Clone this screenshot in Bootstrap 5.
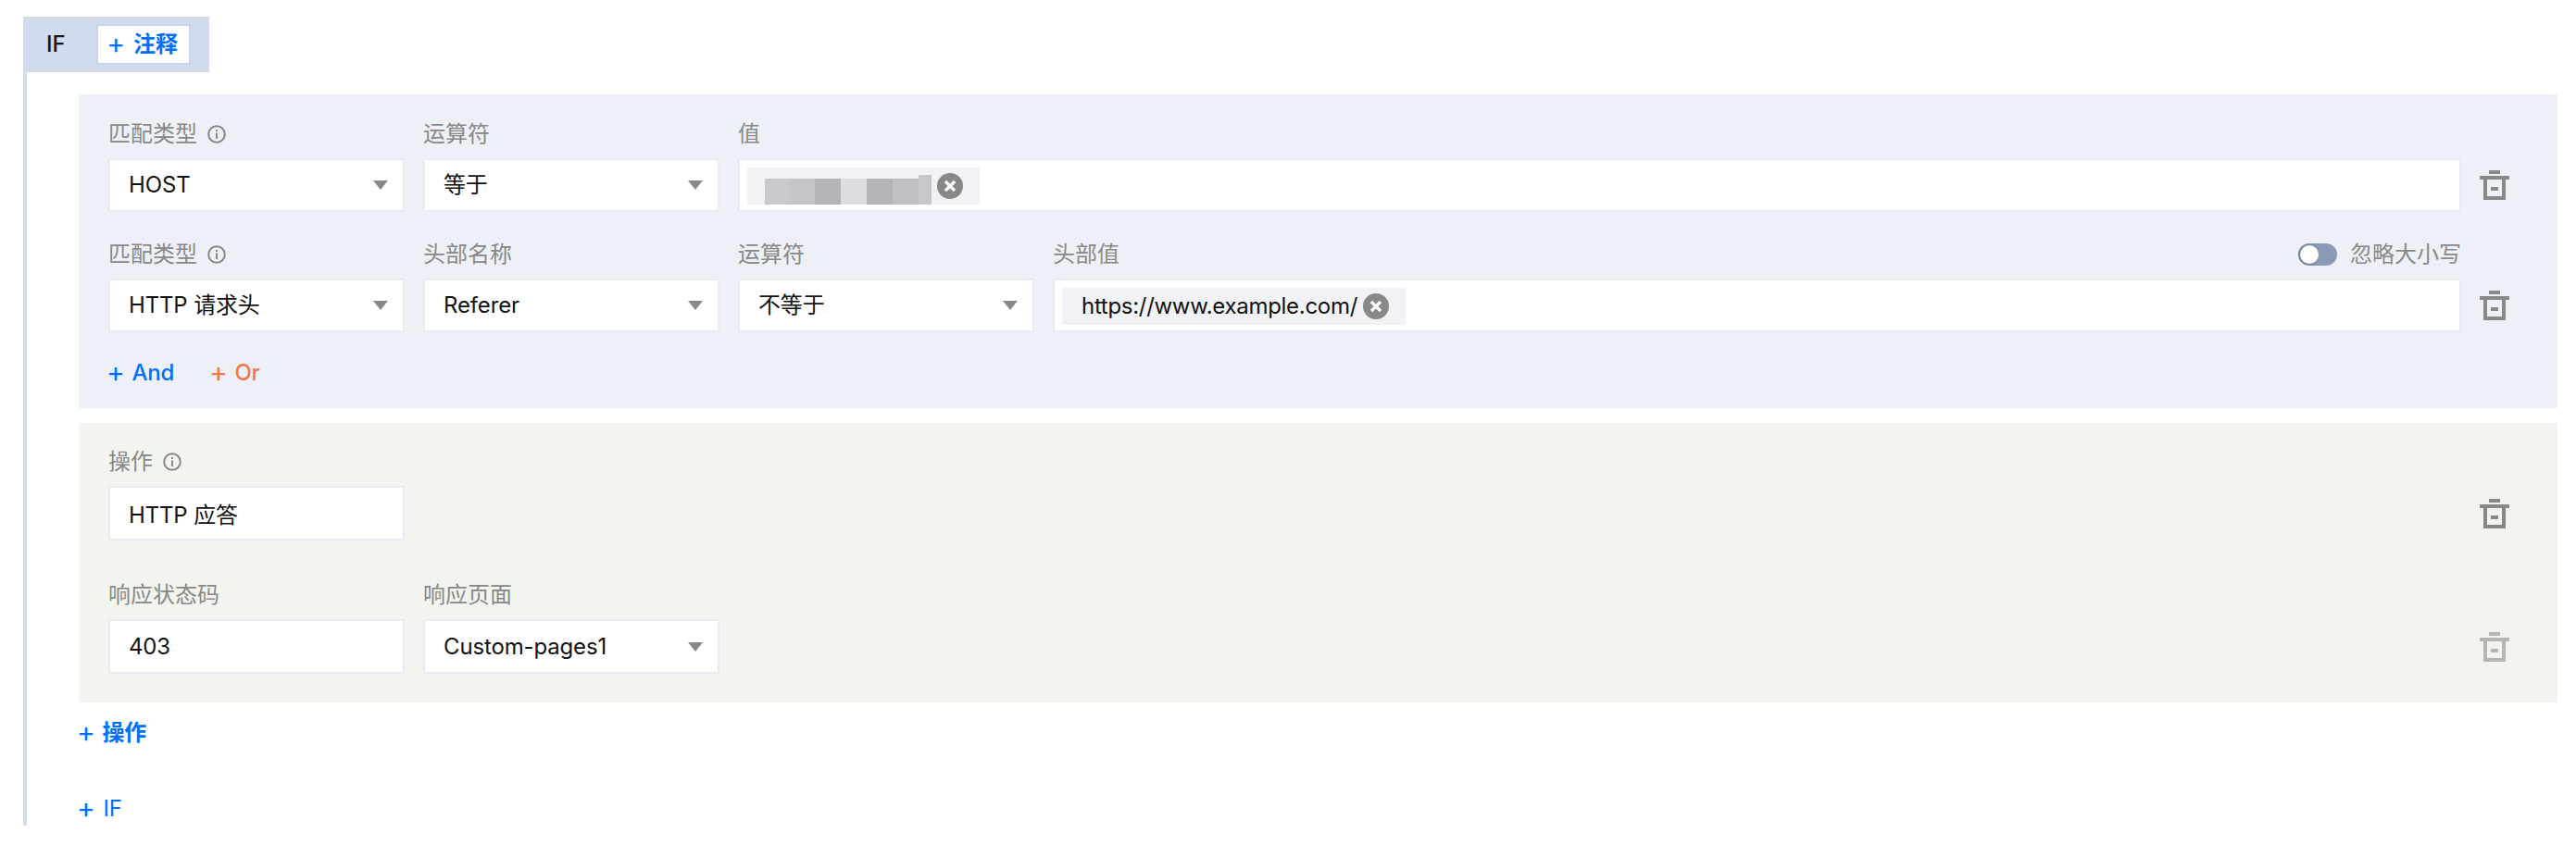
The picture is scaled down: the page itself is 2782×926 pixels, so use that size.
<!DOCTYPE html>
<html lang="zh-CN">
<head>
<meta charset="utf-8">
<title>规则</title>
<link href="https://cdn.jsdelivr.net/npm/bootstrap@5.3.0/dist/css/bootstrap.min.css" rel="stylesheet">
<style>
html,body{background:#fff}
body{font-family:Inter,"Noto Sans CJK SC",sans-serif;font-size:24px;color:#111;padding:18px 20px 34px 25px;line-height:32px}
.sprite{display:block;width:0;height:0}
.if-head{width:201px;height:60px;background:#d0dcee;padding-left:25px;gap:33px;font-weight:500;color:#161616}
.note-btn{display:flex;align-items:center;justify-content:center;gap:11px;height:44px;width:102px;background:#fff;border:2px solid #c5d5ea;color:#006eff;font-size:24px;font-weight:600;padding:0;border-radius:0;line-height:40px}
.note-btn:hover{background:#fff;color:#006eff;border-color:#c5d5ea}
.pls{font-size:30px;line-height:1;font-weight:400;margin:-2px -2px 0}
.if-body{border-left:4px solid #d0dcee;padding:24px 0 0 56px;height:814px}
.cond-panel{background:#edf1f7;height:339px;padding:27px 0 0 32px}
.act-panel{background:#f2f5ef;height:302px;margin-top:16px;padding:26px 0 0 32px}
.field-line{display:flex;align-items:flex-start}
.act-line{padding-right:52px}
.act-line .del{margin-left:auto}
.act-row-two{margin-top:43px}
.field-stack{display:flex;flex-direction:column;gap:10px}
.w-s{width:320px;margin-right:20px}
.w-g{width:1521px}
.w-l{width:1861px}
.cap{height:32px;line-height:32px;color:#888;font-size:24px;display:flex;align-items:center;justify-content:space-between}
.cap-l{display:flex;align-items:center;gap:11px}
.cap-r{display:flex;align-items:center;gap:14px}
.ctl{height:58px;border:2px solid #e8ebf2;background-color:#fff;border-radius:0;font-size:24px;color:#111;padding:0 0 0 20px;line-height:32px;font-family:inherit;letter-spacing:-.15px}
.act-panel .ctl{height:59px}
.ctl:focus{border-color:#e8ebf2;box-shadow:none;color:#111;background-color:#fff}
.form-select.ctl{--bs-form-select-bg-img:none;background-image:url("data:image/svg+xml,%3Csvg xmlns='http://www.w3.org/2000/svg' width='16' height='10'%3E%3Cpath d='M0 0h16L8 10z' fill='%23888'/%3E%3C/svg%3E");background-repeat:no-repeat;background-size:16px 10px;background-position:right 16px center;padding-right:40px}
.tag-box{display:flex;align-items:flex-start;padding:8px;height:58px;border:2px solid #e8ebf2;background:#fff}
.chip{display:flex;align-items:center;height:40px;background:#f1f2f5;padding:0 18px 0 21px;color:#111;white-space:nowrap;letter-spacing:-.3px}
.chip-blur{padding-left:19px}
.mask-row{display:flex;align-items:flex-end;align-self:flex-end;height:32px;width:180px;margin-right:6px}
.mask-row i{display:block;height:28px;width:28px}
.mask-row .m1{background:#c8c9cc;width:27px}
.mask-row .m2{background:#c4c5c8;width:27px}
.mask-row .m3{background:#b3b4b7}
.mask-row .m4{background:#dcdde0}
.mask-row .m5{background:#b3b4b7}
.mask-row .m6{background:#bfc0c3}
.mask-row .m7{background:#c6c7ca;width:14px;height:32px}
.x-ic{width:28px;height:28px;flex:none}
.chip-txt{margin-right:6px}
.del{width:32px;height:32px;flex:none;margin-left:20px;align-self:flex-end;margin-bottom:13px;color:#888}
.del-off{color:#b4b7b0}
.row-two{margin-top:30px}
.add-links{display:flex;gap:40px;margin-top:28px}
.lnk{display:flex;align-items:center;gap:10px;text-decoration:none;font-weight:500;letter-spacing:-.3px}
.lnk-blue{color:#006eff}
.lnk-blue:hover{color:#006eff}
.lnk-or{color:#f2784b}
.lnk-or:hover{color:#f2784b}
.lnk-act{margin-top:17px;font-weight:600}
.lnk-if{margin-top:50px;font-weight:400;gap:11px}
.cap-i{width:20px;height:20px;flex:none}
.tog{width:42px;height:24px;flex:none;border-radius:12px;background:linear-gradient(90deg,#6e7f9c,#8a9ab3 55%);position:relative}
.tog::after{content:"";position:absolute;left:2px;top:2px;width:20px;height:20px;border-radius:50%;background:#fff}
</style>
</head>
<body>
<svg class="sprite" aria-hidden="true">
<symbol id="trash" viewBox="0 0 32 32"><path fill="currentColor" d="M10 0h12v4H10zM0 6h32v4H0zM4 10h4v18h16V10h4v22H4zM12 18h8v4h-8z"/></symbol>
<symbol id="info" viewBox="0 0 20 20"><circle cx="10" cy="10" r="8.8" fill="none" stroke="#888" stroke-width="2"/><path fill="#888" d="M9 8.5h2V15H9zM9 5h2v2H9z"/></symbol>
<symbol id="xc" viewBox="0 0 28 28"><circle cx="14" cy="14" r="14" fill="#888"/><path d="M9 9l10 10M19 9L9 19" stroke="#fff" stroke-width="3.4"/></symbol>
</svg>

<div class="if-head d-flex align-items-center">
  <span>IF</span>
  <button type="button" class="btn note-btn"><span class="pls">+</span><span>注释</span></button>
</div>
<div class="if-body">
  <section class="cond-panel">
    <div class="field-line">
      <div class="field-stack w-s">
        <div class="cap"><span class="cap-l">匹配类型 <svg class="cap-i"><use href="#info"/></svg></span></div>
        <select class="form-select ctl"><option>HOST</option></select>
      </div>
      <div class="field-stack w-s">
        <div class="cap">运算符</div>
        <select class="form-select ctl"><option>等于</option></select>
      </div>
      <div class="field-stack w-l">
        <div class="cap">值</div>
        <div class="tag-box">
          <span class="chip chip-blur">
            <span class="mask-row"><i class="m1"></i><i class="m2"></i><i class="m3"></i><i class="m4"></i><i class="m5"></i><i class="m6"></i><i class="m7"></i></span>
            <svg class="x-ic"><use href="#xc"/></svg>
          </span>
        </div>
      </div>
      <svg class="del"><use href="#trash"/></svg>
    </div>
    <div class="field-line row-two">
      <div class="field-stack w-s">
        <div class="cap"><span class="cap-l">匹配类型 <svg class="cap-i"><use href="#info"/></svg></span></div>
        <select class="form-select ctl"><option>HTTP 请求头</option></select>
      </div>
      <div class="field-stack w-s">
        <div class="cap">头部名称</div>
        <select class="form-select ctl"><option>Referer</option></select>
      </div>
      <div class="field-stack w-s">
        <div class="cap">运算符</div>
        <select class="form-select ctl"><option>不等于</option></select>
      </div>
      <div class="field-stack w-g">
        <div class="cap"><span>头部值</span><span class="cap-r"><span class="tog"></span><span>忽略大小写</span></span></div>
        <div class="tag-box">
          <span class="chip"><span class="chip-txt">https://www.example.com/</span><svg class="x-ic"><use href="#xc"/></svg></span>
        </div>
      </div>
      <svg class="del"><use href="#trash"/></svg>
    </div>
    <div class="add-links">
      <a href="#" class="lnk lnk-blue"><span class="pls">+</span><span>And</span></a>
      <a href="#" class="lnk lnk-or"><span class="pls">+</span><span>Or</span></a>
    </div>
  </section>
  <section class="act-panel">
    <div class="field-line act-line">
      <div class="field-stack w-s">
        <div class="cap"><span class="cap-l">操作 <svg class="cap-i"><use href="#info"/></svg></span></div>
        <input class="form-control ctl" value="HTTP 应答" readonly>
      </div>
      <svg class="del"><use href="#trash"/></svg>
    </div>
    <div class="field-line act-line act-row-two">
      <div class="field-stack w-s">
        <div class="cap">响应状态码</div>
        <input class="form-control ctl" value="403" readonly>
      </div>
      <div class="field-stack w-s">
        <div class="cap">响应页面</div>
        <select class="form-select ctl"><option>Custom-pages1</option></select>
      </div>
      <svg class="del del-off"><use href="#trash"/></svg>
    </div>
  </section>
  <a href="#" class="lnk lnk-blue lnk-act"><span class="pls">+</span><span>操作</span></a>
  <a href="#" class="lnk lnk-blue lnk-if"><span class="pls">+</span><span>IF</span></a>
</div>
</body>
</html>
